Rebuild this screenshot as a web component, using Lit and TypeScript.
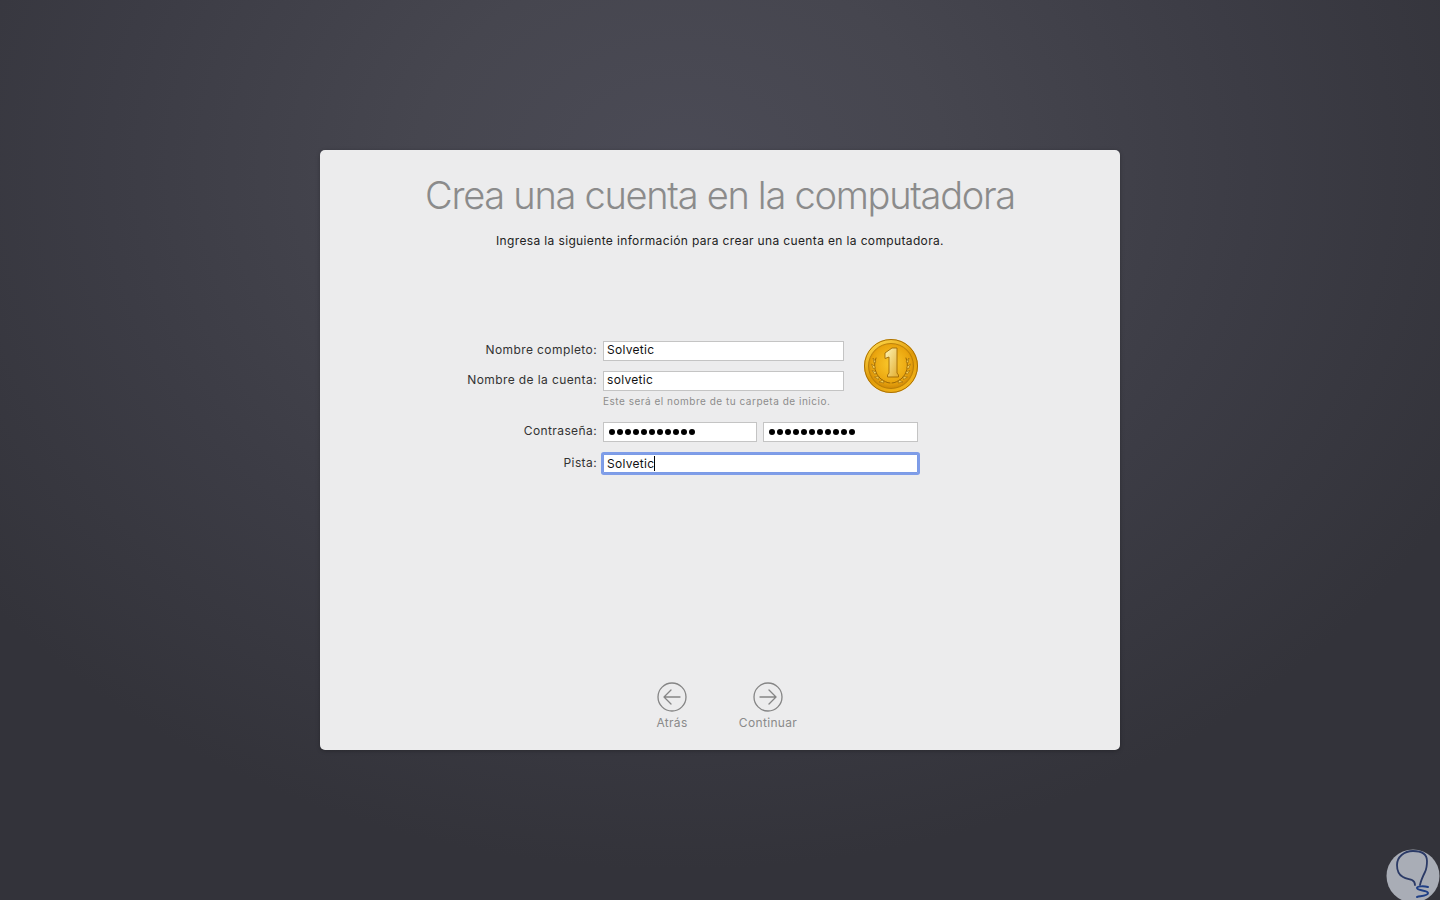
import { LitElement, html, css, svg } from "lit";
import { customElement } from "lit/decorators.js";

const wreath = (flip: boolean) => svg`
  <g transform=${flip ? "translate(54 0) scale(-1 1)" : ""}>
    <path d="M12 19c-3 8-1 16 5 21 3 2 6 4 9 4" fill="none" stroke="#9a6606" stroke-width="1" stroke-linecap="round" />
    <path d="M12 23l-3 -4 1 5zM11.500 28l-4 -3 2 5zM12.500 33l-4.500 -1.500 3 4zM15 37.500l-4.500 .5 4 2.500zM19 41l-4 2 5 1z" fill="#f7d25a" stroke="#9a6606" stroke-width="0.6" stroke-linejoin="round" />
  </g>`;

@customElement("app-root")
export class AppRoot extends LitElement {
  static styles = css`
    :host {
      display: flex;
      width: 1440px;
      height: 900px;
      position: relative;
      overflow: hidden;
      align-items: flex-start;
      justify-content: center;
      padding-top: 150px;
      box-sizing: border-box;
      background: radial-gradient(ellipse 880px 700px at 680px 170px, #4b4b56 0%, #46464f 30%, #3c3c45 65%, #33333a 100%);
      font-family: "Inter", "Liberation Sans", sans-serif;
      color: #1c1c1c;
    }
    .card {
      width: 800px;
      height: 600px;
      background: #ececed;
      border-radius: 5px;
      display: flex;
      flex-direction: column;
      align-items: center;
      box-shadow: 0 1px 4px rgba(0, 0, 0, 0.25);
    }
    h1 {
      margin: 22px 0 0;
      font-size: 38px;
      line-height: 46px;
      font-weight: 300;
      color: #8b8b8b;
      letter-spacing: -1.28px;
      white-space: nowrap;
    }
    .sub {
      margin: 15px 0 0;
      font-size: 12px;
      line-height: 16px;
      color: #222;
      letter-spacing: 0.36px;
      white-space: nowrap;
    }
    .form {
      align-self: flex-start;
      margin-top: 92px;
      margin-left: 106px;
      display: grid;
      grid-template-columns: 177px 154px 6px 81px 20px 54px;
      grid-template-rows: 20px 10px 20px 31px 20px 12px 19px;
      font-size: 12px;
    }
    .label {
      grid-column: 1;
      text-align: right;
      line-height: 18px;
      color: #333;
      letter-spacing: 0.4px;
      white-space: nowrap;
      padding-right: 6px;
    }
    .r1 { grid-row: 1; }
    .r2 { grid-row: 3; }
    .r3 { grid-row: 5; }
    .r4 { grid-row: 7; }
    .field {
      box-sizing: border-box;
      background: #fff;
      border: 1px solid #c4c4c4;
      font-size: 12px;
      line-height: 16px;
      padding: 0 3px;
      color: #111;
      letter-spacing: 0.3px;
      white-space: nowrap;
      overflow: hidden;
    }
    .full { grid-column: 2 / span 3; }
    .pw1 { grid-column: 2; }
    .pw2 { grid-column: 4 / span 3; width: 155px; }
    .dots {
      display: flex;
      align-items: center;
      gap: 1.82px;
      padding-left: 5px;
    }
    .dots i {
      width: 6.2px;
      height: 6.2px;
      border-radius: 50%;
      background: #000;
      flex: none;
    }
    .hint {
      grid-column: 2 / span 5;
      grid-row: 4;
      font-size: 10px;
      line-height: 21px;
      color: #8c8c8c;
      letter-spacing: 0.51px;
      white-space: nowrap;
    }
    .focus {
      grid-column: 2 / span 5;
      border: 1px solid #7b9be6;
      border-radius: 1px;
      box-shadow: 0 0 0 2px #7f9de8;
      width: 315px;
      display: flex;
      align-items: center;
    }
    .caret {
      width: 1px;
      height: 15px;
      background: #000;
      flex: none;
    }
    .avatar {
      grid-column: 6;
      grid-row: 1 / span 4;
      width: 54px;
      height: 54px;
      margin-top: -2px;
    }
    .nav {
      margin-top: auto;
      margin-bottom: 19px;
      display: flex;
      align-items: flex-start;
    }
    .btn {
      width: 96px;
      display: flex;
      flex-direction: column;
      align-items: center;
      gap: 2px;
      font-size: 12px;
      line-height: 17px;
      color: #8a8a8a;
      letter-spacing: 0.33px;
    }
    .btn svg { width: 30px; height: 30px; display: block; }
    .mark {
      position: absolute;
      left: 1386px;
      top: 848px;
      width: 54px;
      height: 52px;
    }
  `;

  private dots() {
    return Array.from({ length: 11 }, () => html`<i></i>`);
  }

  private coin() {
    return html`<svg class="avatar" viewBox="0 0 54 54" aria-hidden="true">
      <defs>
        <linearGradient id="rim" x1="0.2" y1="0" x2="0.8" y2="1">
          <stop offset="0" stop-color="#ffd84a" />
          <stop offset="0.5" stop-color="#e09a08" />
          <stop offset="1" stop-color="#f6b81c" />
        </linearGradient>
        <radialGradient id="face" cx="0.5" cy="0.45" r="0.6">
          <stop offset="0" stop-color="#fbc92c" />
          <stop offset="0.7" stop-color="#eaa50e" />
          <stop offset="1" stop-color="#c67f04" />
        </radialGradient>
        <linearGradient id="one" x1="0" y1="0" x2="1" y2="1">
          <stop offset="0" stop-color="#fff6b8" />
          <stop offset="1" stop-color="#e2ac2c" />
        </linearGradient>
      </defs>
      <circle cx="27" cy="27" r="27" fill="url(#rim)" />
      <circle cx="27" cy="27" r="26.500" fill="none" stroke="#a86f06" stroke-width="1" />
      <circle cx="27" cy="27" r="22.500" fill="url(#face)" stroke="#b07606" stroke-width="0.8" />
      ${wreath(false)} ${wreath(true)}
      <path d="M21 14l7-5h5v25l1.500 2v2h-11v-2l1.500-2V18l-4 1.500z" fill="url(#one)" stroke="#a06a06" stroke-width="0.9" stroke-linejoin="round" />
    </svg>`;
  }

  render() {
    return html`
      <main class="card">
        <h1>Crea una cuenta en la computadora</h1>
        <p class="sub">Ingresa la siguiente información para crear una cuenta en la computadora.</p>
        <div class="form">
          <span class="label r1">Nombre completo:</span>
          <div class="field full r1">Solvetic</div>
          <span class="label r2">Nombre de la cuenta:</span>
          <div class="field full r2">solvetic</div>
          <div class="hint">Este será el nombre de tu carpeta de inicio.</div>
          <span class="label r3">Contraseña:</span>
          <div class="field pw1 r3 dots">${this.dots()}</div>
          <div class="field pw2 r3 dots">${this.dots()}</div>
          <span class="label r4">Pista:</span>
          <div class="field focus r4">Solvetic<span class="caret"></span></div>
          ${this.coin()}
        </div>
        <nav class="nav">
          <div class="btn">
            <svg viewBox="0 0 30 30" fill="none" stroke="#858585" stroke-width="1.300">
              <circle cx="15" cy="15" r="14" />
              <path d="M23 15H7.500M14 8l-7 7 7 7" stroke-linecap="round" stroke-linejoin="round" />
            </svg>
            <span>Atrás</span>
          </div>
          <div class="btn">
            <svg viewBox="0 0 30 30" fill="none" stroke="#858585" stroke-width="1.300">
              <circle cx="15" cy="15" r="14" />
              <path d="M7 15h15.500M16 8l7 7-7 7" stroke-linecap="round" stroke-linejoin="round" />
            </svg>
            <span>Continuar</span>
          </div>
        </nav>
      </main>
      <svg class="mark" viewBox="0 0 54 52" aria-hidden="true">
        <circle cx="27" cy="28" r="26.500" fill="#a9adb6" />
        <path d="M27 3C18 3 11 9 11 17c0 6 2 10 6 12 3 2 7 2 9 3 2 1 3 3 3 5M27 3c8 0 14 3 14 10 0 4 0 7-2 11-2 4-4 8-5 13" fill="none" stroke="#2b3a66" stroke-width="1.800" stroke-linecap="round" />
        <path d="M42 39c-4-1-11-1-11 1 0 3 11 2 11 5 0 3-7 3-11 4" fill="none" stroke="#1f3f86" stroke-width="2" stroke-linecap="round" />
      </svg>
    `;
  }
}
